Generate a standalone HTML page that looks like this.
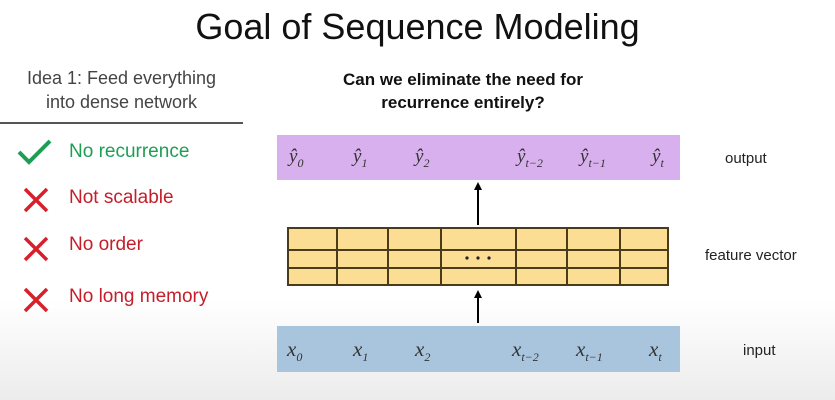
<!DOCTYPE html>
<html><head><style>
body{margin:0;width:835px;height:400px;overflow:hidden;position:relative;font-family:"Liberation Sans",sans-serif;background:linear-gradient(#fff 0,#fff 300px,#ececec 400px);}
.a{position:absolute;white-space:nowrap}
.m{font-family:"Liberation Serif",serif;font-style:italic;font-size:19px;color:#333}
.m sub{font-size:12px;font-style:italic}
</style></head><body>
<div class="a" style="left:0;width:835px;top:6px;text-align:center;font-size:36px;color:#111">Goal of Sequence Modeling</div>
<div class="a" style="left:0;width:243px;top:66px;text-align:center;font-size:18px;line-height:24px;color:#444">Idea 1: Feed everything<br>into dense network</div>
<div class="a" style="left:0;top:122px;width:243px;height:2px;background:#555"></div>
<svg class="a" style="left:16px;top:138px" width="40" height="28"><path d="M3 14 L13 24 L34 3" stroke="#1e9e54" stroke-width="4" fill="none"/></svg>
<div class="a" style="left:69px;top:141px;font-size:19px;color:#1e9e54">No recurrence</div>
<svg class="a" style="left:22px;top:186px" width="28" height="28"><path d="M3 3L25 25M25 3L3 25" stroke="#d8202a" stroke-width="3.5"/></svg>
<div class="a" style="left:69px;top:187px;font-size:19px;color:#c41e2a">Not scalable</div>
<svg class="a" style="left:22px;top:235px" width="28" height="28"><path d="M3 3L25 25M25 3L3 25" stroke="#d8202a" stroke-width="3.5"/></svg>
<div class="a" style="left:69px;top:234px;font-size:19px;color:#c41e2a">No order</div>
<svg class="a" style="left:22px;top:286px" width="28" height="28"><path d="M3 3L25 25M25 3L3 25" stroke="#d8202a" stroke-width="3.5"/></svg>
<div class="a" style="left:69px;top:286px;font-size:19px;color:#c41e2a">No long memory</div>
<div class="a" style="left:263px;width:400px;top:68px;text-align:center;font-size:17px;font-weight:bold;line-height:23px;color:#111">Can we eliminate the need for<br>recurrence entirely?</div>
<div class="a" style="left:277px;top:135px;width:403px;height:45px;background:#d9b0ee"></div>
<div class="a" style="left:277px;top:326px;width:403px;height:46px;background:#a9c5dd"></div>
<svg class="a" style="left:0;top:0" width="835" height="400">
<rect x="288" y="228" width="380" height="57" fill="#fbde94" stroke="#4a3b1a" stroke-width="2"/>
<path d="M288 250H668M288 268H668M337 228V285M388 228V285M441 228V285M516 228V285M567 228V285M620 228V285" stroke="#4a3b1a" stroke-width="2"/>
<circle cx="467" cy="258" r="1.6" fill="#222"/><circle cx="478" cy="258" r="1.6" fill="#222"/><circle cx="489" cy="258" r="1.6" fill="#222"/>
<path d="M478 225V188M478 323V296" stroke="#000" stroke-width="2"/>
<path d="M474 190L478 182L482 190ZM474 298L478 290L482 298Z" fill="#000"/>
</svg>
<div class="a m" style="left:289px;top:146px">ŷ<sub>0</sub></div>
<div class="a m" style="left:353px;top:146px">ŷ<sub>1</sub></div>
<div class="a m" style="left:415px;top:146px">ŷ<sub>2</sub></div>
<div class="a m" style="left:517px;top:146px">ŷ<sub>t−2</sub></div>
<div class="a m" style="left:580px;top:146px">ŷ<sub>t−1</sub></div>
<div class="a m" style="left:652px;top:146px">ŷ<sub>t</sub></div>
<div class="a m" style="left:287px;top:337px;font-size:21px">x<sub>0</sub></div>
<div class="a m" style="left:353px;top:337px;font-size:21px">x<sub>1</sub></div>
<div class="a m" style="left:415px;top:337px;font-size:21px">x<sub>2</sub></div>
<div class="a m" style="left:512px;top:337px;font-size:21px">x<sub>t−2</sub></div>
<div class="a m" style="left:576px;top:337px;font-size:21px">x<sub>t−1</sub></div>
<div class="a m" style="left:649px;top:337px;font-size:21px">x<sub>t</sub></div>
<div class="a" style="left:725px;top:150px;font-size:15px;color:#222">output</div>
<div class="a" style="left:705px;top:247px;font-size:15px;color:#222">feature vector</div>
<div class="a" style="left:743px;top:342px;font-size:15px;color:#222">input</div>
</body></html>
